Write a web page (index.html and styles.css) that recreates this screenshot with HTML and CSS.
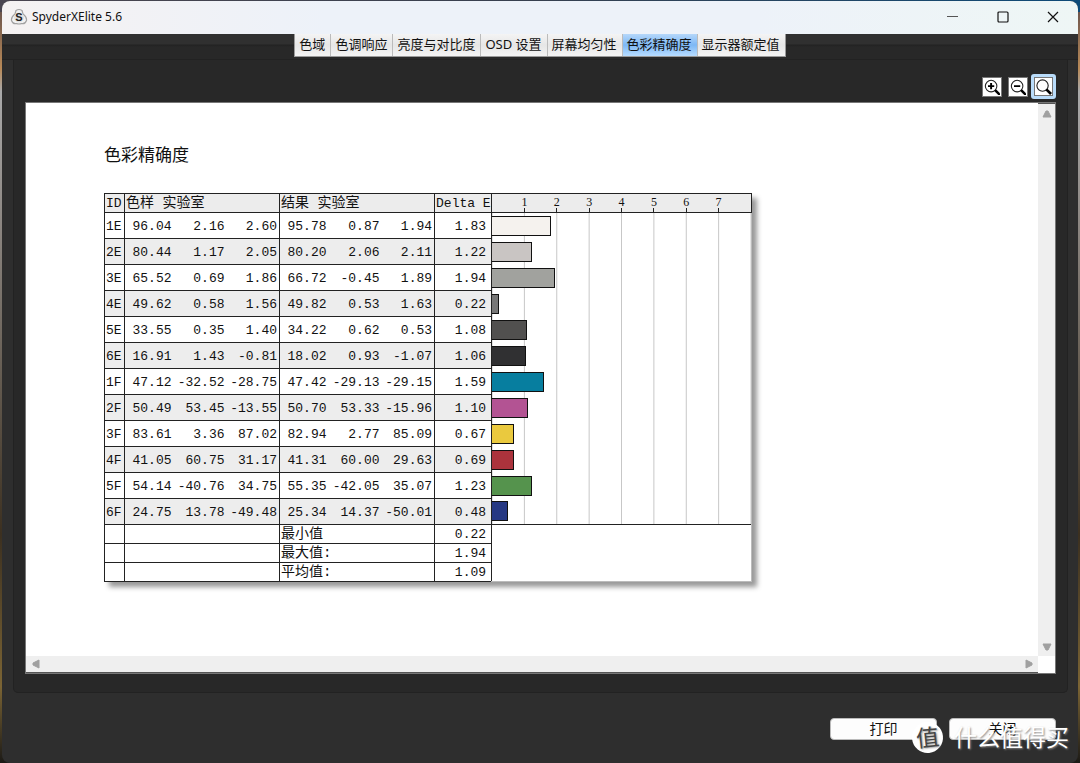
FILE: index.html
```html
<!DOCTYPE html>
<html lang="zh-CN">
<head>
<meta charset="utf-8">
<title>SpyderXElite 5.6</title>
<link rel="stylesheet" href="styles.css">
</head>
<body>
<div class="window">
  <header class="titlebar">
    <svg class="logo" width="18" height="18" viewBox="0 0 18 18" aria-hidden="true">
      <path d="M6 2.500Q9 .5 12 2.500L13 6Q17 9 16.500 12.500Q15 16.500 11.500 15.500Q9 16.500 6.500 15.500Q3 16.500 1.500 12.500Q1 9 5 6Z" fill="#f2f2f2" stroke="#a2a2a2" stroke-width="1.200"/>
      <circle cx="9" cy="9.500" r="5" fill="#e2e2e2"/>
      <text x="9" y="13" text-anchor="middle" class="logo-letter">S</text>
    </svg>
    <h1 class="title">SpyderXElite 5.6</h1>
    <button class="caption" aria-label="最小化"><svg width="12" height="12" viewBox="0 0 12 12"><path d="M0 5.500H11" fill="none" stroke="#555"/></svg></button>
    <button class="caption" aria-label="最大化"><svg width="12" height="12" viewBox="0 0 12 12"><rect x="1" y="1" width="10" height="10" rx="1" fill="none" stroke="#111" stroke-width="1.200"/></svg></button>
    <button class="caption" aria-label="关闭窗口"><svg width="12" height="12" viewBox="0 0 12 12"><path d="M1 1L11 11M11 1L1 11" fill="none" stroke="#111" stroke-width="1.200"/></svg></button>
  </header>

  <nav class="tabbar">
    <div class="tabs" role="tablist">
      <button class="tab" role="tab">色域</button>
      <button class="tab" role="tab">色调响应</button>
      <button class="tab" role="tab">亮度与对比度</button>
      <button class="tab" role="tab">OSD 设置</button>
      <button class="tab" role="tab">屏幕均匀性</button>
      <button class="tab tab-active" role="tab" aria-selected="true">色彩精确度</button>
      <button class="tab" role="tab">显示器额定值</button>
    </div>
  </nav>

  <main class="panel">
    <div class="tools">
      <button class="tool" aria-label="放大"><svg viewBox="0 0 18 18"><circle cx="8" cy="8" r="6.500" fill="#fff" stroke="#222" stroke-width="1.200"/><path d="M12.500 12.500L18 18" stroke="#000" stroke-width="2.800"/><path d="M4.500 8H11.500M8 4.500V11.500" stroke="#000" stroke-width="2.200"/></svg></button>
      <button class="tool" aria-label="缩小"><svg viewBox="0 0 18 18"><circle cx="8" cy="8" r="6.500" fill="#fff" stroke="#222" stroke-width="1.200"/><path d="M12.500 12.500L18 18" stroke="#000" stroke-width="2.800"/><path d="M4.500 8H11.500" stroke="#000" stroke-width="2.200"/></svg></button>
      <button class="tool tool-active" aria-label="适合窗口"><svg viewBox="0 0 18 18"><circle cx="8" cy="8" r="6" fill="#fff" stroke="#222" stroke-width="1.200"/><path d="M12 12L17 17" stroke="#000" stroke-width="2.800"/></svg></button>
    </div>

    <div class="viewer">
      <section class="page">
        <h2 class="heading">色彩精确度</h2>
        <table class="report">
          <colgroup>
            <col class="c-id"><col class="c-l"><col class="c-a"><col class="c-b"><col class="c-l"><col class="c-a"><col class="c-b"><col class="c-delta"><col class="c-chart">
          </colgroup>
          <thead>
            <tr>
              <th scope="col">ID</th>
              <th class="label" scope="colgroup" colspan="3">色样 实验室</th>
              <th class="label" scope="colgroup" colspan="3">结果 实验室</th>
              <th scope="col">Delta E</th>
              <th class="scale"><div class="ticks"><span>1</span><span>2</span><span>3</span><span>4</span><span>5</span><span>6</span><span>7</span></div></th>
            </tr>
          </thead>
          <tbody id="rows"></tbody>
          <tfoot>
            <tr><td></td><td colspan="3"></td><th class="label" scope="row" colspan="3">最小值</th><td class="delta">0.22</td><td class="blank" rowspan="3"></td></tr>
            <tr><td></td><td colspan="3"></td><th class="label" scope="row" colspan="3">最大值:</th><td class="delta">1.94</td></tr>
            <tr><td></td><td colspan="3"></td><th class="label" scope="row" colspan="3">平均值:</th><td class="delta">1.09</td></tr>
          </tfoot>
        </table>
      </section>
      <div class="scroll-y">
        <svg width="10" height="8" viewBox="0 0 10 8"><path d="M4 1H6L9 7H1Z" fill="#a0a0a0" stroke="#a0a0a0" stroke-linejoin="round"/></svg>
        <svg width="10" height="8" viewBox="0 0 10 8"><path d="M4 7H6L9 1H1Z" fill="#a0a0a0" stroke="#a0a0a0" stroke-linejoin="round"/></svg>
      </div>
      <div class="scroll-x">
        <svg width="8" height="10" viewBox="0 0 8 10"><path d="M1 4V6L7 9V1Z" fill="#a0a0a0" stroke="#a0a0a0" stroke-linejoin="round"/></svg>
        <svg width="8" height="10" viewBox="0 0 8 10"><path d="M7 4V6L1 9V1Z" fill="#a0a0a0" stroke="#a0a0a0" stroke-linejoin="round"/></svg>
      </div>
      <div class="corner"></div>
    </div>
  </main>

  <footer class="actions">
    <button class="action">打印</button>
    <button class="action">关闭</button>
  </footer>
</div>
<div class="watermark"><span class="badge">值</span><span>什么值得买</span></div>
<script src="rows.js"></script>
</body>
</html>
```
FILE: rows.js
```js
const patches = [
  ["1E", "96.04", "2.16", "2.60", "95.78", "0.87", "1.94", "1.83", "#f5f2ee"],
  ["2E", "80.44", "1.17", "2.05", "80.20", "2.06", "2.11", "1.22", "#c9c5c3"],
  ["3E", "65.52", "0.69", "1.86", "66.72", "-0.45", "1.89", "1.94", "#a1a29e"],
  ["4E", "49.62", "0.58", "1.56", "49.82", "0.53", "1.63", "0.22", "#777777"],
  ["5E", "33.55", "0.35", "1.40", "34.22", "0.62", "0.53", "1.08", "#51504f"],
  ["6E", "16.91", "1.43", "-0.81", "18.02", "0.93", "-1.07", "1.06", "#303032"],
  ["1F", "47.12", "-32.52", "-28.75", "47.42", "-29.13", "-29.15", "1.59", "#077e9f"],
  ["2F", "50.49", "53.45", "-13.55", "50.70", "53.33", "-15.96", "1.10", "#b35393"],
  ["3F", "83.61", "3.36", "87.02", "82.94", "2.77", "85.09", "0.67", "#eac93e"],
  ["4F", "41.05", "60.75", "31.17", "41.31", "60.00", "29.63", "0.69", "#ab333c"],
  ["5F", "54.14", "-40.76", "34.75", "55.35", "-42.05", "35.07", "1.23", "#55934d"],
  ["6F", "24.75", "13.78", "-49.48", "25.34", "14.37", "-50.01", "0.48", "#263883"]
];
const SCALE_MAX = 8;

document.getElementById("rows").innerHTML = patches.map(p => {
  const [id, ...rest] = p;
  const color = rest.pop();
  const delta = rest.pop();
  const lab = rest.map((v, i) => `<td class="num${i % 3 === 2 ? " num-end" : ""}">${v}</td>`).join("");
  const width = delta / SCALE_MAX * 100;
  return `<tr><th scope="row">${id}</th>${lab}<td class="delta">${delta}</td>` +
    `<td class="chart"><div class="bar" style="width:${width}%;background:${color}"></div></td></tr>`;
}).join("");
```
FILE: styles.css
```css
* { box-sizing: border-box; }

body {
  margin: 0;
  min-height: 100vh;
  display: flex;
  padding: 1px 2px 0;
  background: linear-gradient(90deg, #4a4650, #37404f 50%, #0d4a78) top / 100% 12px no-repeat,
    linear-gradient(#5d4a48, #b98a58 9%, #aaa 12%, #8b8580 30%, #3c3020 70%, #7b6434 90%, #1c1a16);
  font-family: "Noto Sans", "Noto Sans CJK SC", sans-serif;
  color: #111;
}

button {
  font: inherit;
  color: inherit;
  border: 0;
  padding: 0;
  background: none;
}

svg { display: block; }

.window {
  flex: 1;
  min-width: 0;
  display: flex;
  flex-direction: column;
  background: #2e2e2e;
  border-radius: 8px;
  overflow: hidden;
}

.titlebar {
  height: 33px;
  display: flex;
  align-items: center;
  padding: 0 0 1px 8px;
  background: linear-gradient(90deg, #f5f2f2, #edf2f9 30%, #edf2f9 70%, #eef6f5);
}

.logo-letter { font: bold 11px "Liberation Sans", sans-serif; fill: #222; }

.title {
  flex: 1;
  margin: 0 0 0 4px;
  font: 400 12px/20px "Noto Sans", sans-serif;
}

.caption {
  width: 50px;
  height: 32px;
  display: flex;
  align-items: center;
  justify-content: center;
}

.tabbar {
  height: 26px;
  display: flex;
  justify-content: center;
  align-items: flex-start;
  background: linear-gradient(#303030 10px, #222 11px, #282828 13px);
  border-bottom: 1px solid #222;
}

.tabs {
  display: flex;
  border: solid #999;
  border-width: 0 1px 1px;
  background: #f1f1f1;
}

.tab {
  height: 22px;
  padding: 0 5px 2px 4px;
  border-right: 1px solid #bbb;
  background: linear-gradient(#f4f4f4, #e6e6e6 50%, #f3f3f3);
  font-size: 13px;
  line-height: 19px;
  white-space: nowrap;
}

.tab:last-child { border-right: 0; }
.tab-active { background: linear-gradient(#b5d7fa, #7db8f5 50%, #b7dcff); }

.panel {
  flex: 1;
  display: flex;
  flex-direction: column;
  margin: 0 10px 0 11px;
  padding: 14px 11px 18px;
  background: #282828;
  border: solid #222;
  border-width: 0 1px 1px;
  border-radius: 0 0 5px 5px;
}

.tools {
  display: flex;
  justify-content: flex-end;
  align-items: center;
  gap: 6px;
  height: 25px;
}

.tool {
  padding: 1px;
  border: 1px solid #777;
  background: #fff;
}
.tool svg { width: 16px; height: 16px; }

.tool-active {
  margin-left: -3px;
  border: 3px solid #b9dcfa;
  border-radius: 3px;
}
.tool-active svg { width: 17px; height: 17px; outline: 1px solid #777; }

.viewer {
  flex: 1;
  display: grid;
  grid-template-columns: 1fr 17px;
  grid-template-rows: 1fr 17px;
  margin-top: 3px;
  border: 1px solid #777;
  background: #fff;
}

.page { padding: 40px 78px 0; min-width: 0; }

.scroll-y, .scroll-x {
  display: flex;
  justify-content: space-between;
  align-items: center;
  background: #efefef;
}
.scroll-y { flex-direction: column; padding: 6px 0 5px; border-top: 1px solid #555; }
.scroll-x { padding: 0 5px 0 6px; border-bottom: 1px solid #555; }

.heading { margin: 0; font-size: 17px; line-height: 24px; font-weight: 400; }

.report {
  width: 648px;
  margin-top: 26px;
  border-collapse: collapse;
  table-layout: fixed;
  border: 1px solid #bbb;
  box-shadow: 5px 5px 5px #999;
  background: #fff;
  font-family: "Liberation Mono", "Noto Sans CJK SC", monospace;
  font-size: 13px;
  line-height: 17px;
}

.c-id { width: 20px; }
.c-l { width: 47px; }
.c-a { width: 53px; }
.c-b { width: 55px; }
.c-delta { width: 57px; }

.report th, .report td {
  height: 19px;
  padding: 1px 1px 0;
  border: 1px solid #222;
  font-weight: 400;
  text-align: left;
  white-space: nowrap;
}

.report .label { font-size: 14px; }
.report thead th { background: #ececec; }
.report tbody th, .report tbody td { height: 26px; padding-top: 2px; }
.report tbody tr:nth-child(even) { background: #ededed; }

.report .num, .report .delta { text-align: right; }
.report .num { padding-left: 0; padding-right: 0; border-right: 0; border-left: 0; }
.report .num-end { padding-right: 2px; border-right: 1px solid #222; }
.report .delta { padding-right: 5px; }

.report .scale { padding: 0; vertical-align: top; }
.ticks {
  display: grid;
  grid-template-columns: repeat(8, 1fr);
  font: 12px/17px "Liberation Serif", serif;
}
.ticks span {
  position: relative;
  left: 50%;
  text-align: center;
  background: linear-gradient(#222, #222) bottom / 1px 4px no-repeat;
  height: 18px;
}

.report tbody .chart {
  padding: 0;
  border-top: 0;
  border-bottom: 0;
  border-right-color: #bbb;
  background: linear-gradient(to left, #c6c6c6 1px, transparent 1px) left / 12.5% 100% #fff;
}

.bar { height: 20px; border: 1px solid #111; border-left: 0; }

.report .blank { border-color: #222 #bbb #bbb #222; }

.actions {
  display: flex;
  justify-content: flex-end;
  gap: 12px;
  padding: 25px 22px 23px;
}

.action {
  width: 107px;
  height: 22px;
  border: 1px solid #bbb;
  border-radius: 4px;
  background: #fdfdfd;
  font-size: 14px;
  line-height: 20px;
}

.watermark {
  position: absolute;
  right: 11px;
  bottom: 10px;
  display: flex;
  align-items: center;
  gap: 11px;
  color: #fff;
  font-size: 23px;
  line-height: 32px;
  text-shadow: 1px 1px 2px #888;
  pointer-events: none;
}

.badge {
  width: 31px;
  height: 31px;
  border-radius: 50%;
  background: #fff;
  color: #444;
  text-align: center;
  line-height: 30px;
  transform: rotate(-6deg);
}
```
